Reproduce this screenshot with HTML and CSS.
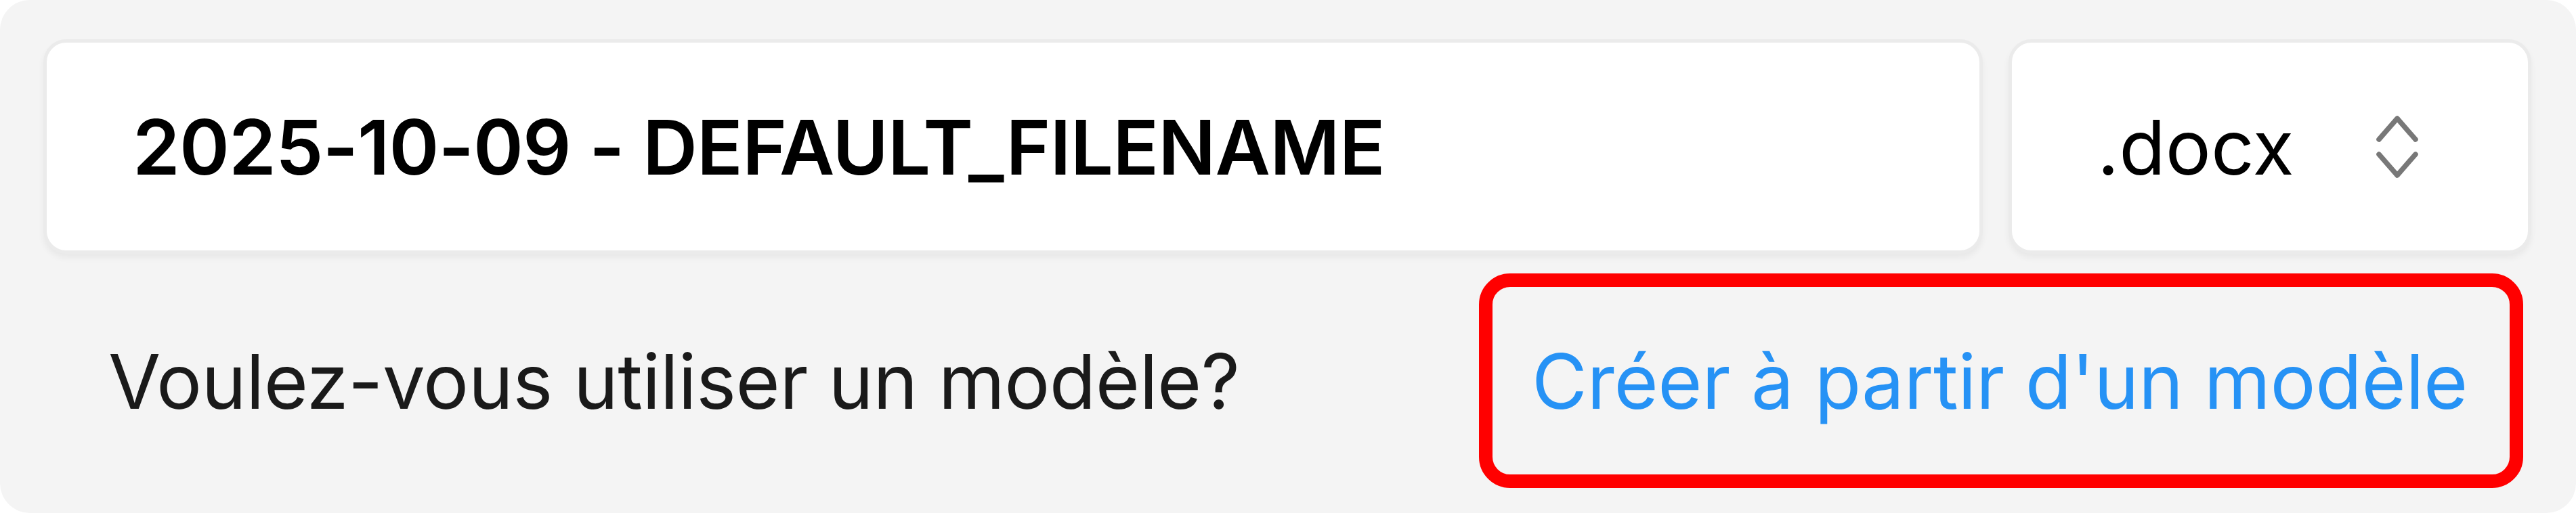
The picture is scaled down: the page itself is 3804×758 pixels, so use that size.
FILE: index.html
```html
<!DOCTYPE html>
<html lang="fr">
<head>
<meta charset="utf-8">
<title>Nouveau document</title>
<link rel="stylesheet" href="styles.css">
</head>
<body>
<div class="panel">
  <div class="row-fields">
    <div class="field field-name">2025-10-09 - DEFAULT_FILENAME</div>
    <div class="field field-ext">
      <span class="ext-label">.docx</span>
      <svg class="chevrons" viewBox="0 0 64 96" width="64" height="96" aria-hidden="true">
        <path d="M5 37 L32 6 L59 37" />
        <path d="M5 59 L32 90 L59 59" />
      </svg>
    </div>
  </div>
  <div class="row-template">
    <span class="question">Voulez-vous utiliser un modèle?</span>
    <span class="template-link">Créer à partir d'un modèle</span>
  </div>
</div>
</body>
</html>
```

FILE: styles.css
```css
html, body {
  margin: 0;
  padding: 0;
  background: #ffffff;
}

body {
  width: 3804px;
  height: 758px;
  font-family: Inter, "Noto Sans", "Liberation Sans", sans-serif;
}

.panel {
  box-sizing: border-box;
  width: 3804px;
  height: 758px;
  background: #f4f4f4;
  border-radius: 44px;
  padding: 58px 66px 0 64px;
  display: flex;
  flex-direction: column;
}

.row-fields {
  display: flex;
  gap: 38px;
  height: 317px;
}

.field {
  box-sizing: border-box;
  height: 317px;
  background: #ffffff;
  border: 5px solid #ebebeb;
  border-radius: 34px;
  box-shadow: 0 6px 10px rgba(0, 0, 0, 0.05);
  display: flex;
  align-items: center;
}

.field-name {
  flex: 1;
  padding-left: 127px;
  font-size: 112px;
  font-weight: 600;
  letter-spacing: -0.8px;
  color: #000000;
}

.field-ext {
  width: 772px;
  padding-left: 126px;
  font-size: 112px;
  font-weight: 400;
  color: #000000;
}

.ext-label {
  width: 411px;
}

.chevrons {
  fill: none;
  stroke: #787878;
  stroke-width: 7.5;
  stroke-linecap: round;
  stroke-linejoin: round;
}

.row-template {
  margin-top: 29px;
  height: 317px;
  display: flex;
  align-items: center;
  justify-content: space-between;
  padding-left: 96px;
  padding-right: 12px;
}

.question {
  font-size: 112px;
  letter-spacing: -0.6px;
  color: #1a1a1a;
}

.template-link {
  box-sizing: border-box;
  height: 317px;
  display: flex;
  align-items: center;
  padding: 0 62px 0 58px;
  border: 20px solid #ff0000;
  border-radius: 46px;
  font-size: 112px;
  letter-spacing: -0.4px;
  color: #2692f5;
}
```
